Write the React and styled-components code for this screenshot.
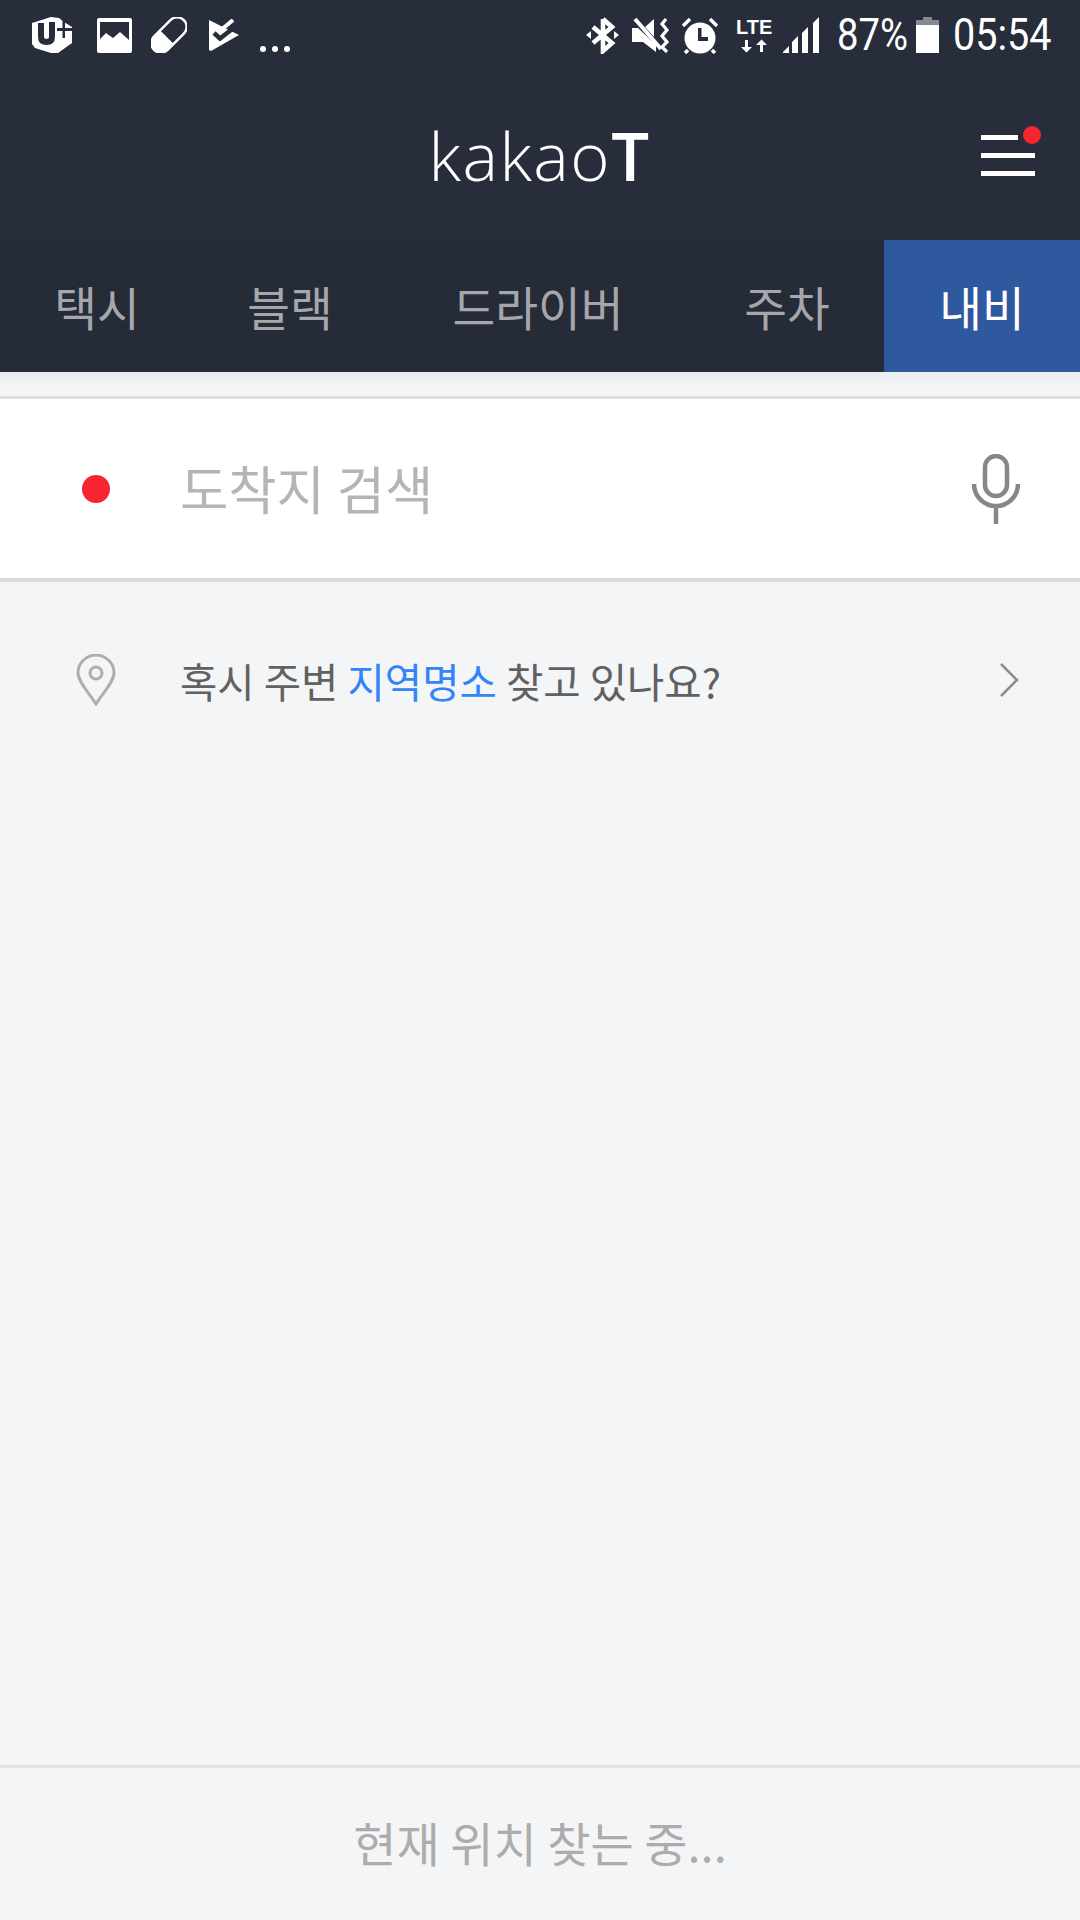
import React from "react"
import styled, { createGlobalStyle } from "styled-components"

const KR = `"Noto Sans CJK KR", "Noto Sans", sans-serif`

const GlobalStyle = createGlobalStyle`
  html, body {
    margin: 0;
    padding: 0;
    background: #f4f5f7;
  }
  * {
    box-sizing: border-box;
  }
`

const Page = styled.div`
  width: 1080px;
  height: 1920px;
  display: flex;
  flex-direction: column;
  background: #f4f5f7;
  overflow: hidden;
`

const Header = styled.header`
  background: #272d3a;
  color: #fff;
`

const StatusBar = styled.div`
  height: 70px;
  display: flex;
  justify-content: space-between;
  align-items: center;
`

const StatusLeft = styled.div`
  display: flex;
  align-items: center;
  padding-left: 31px;
`

const StatusRight = styled.div`
  display: flex;
  align-items: center;
  padding-right: 29px;
`

const StatusIcon = styled.svg`
  display: block;
  flex: none;
  margin-left: ${(p) => p.$gap || 0}px;
`

const StatusText = styled.span`
  display: block;
  flex: none;
  width: ${(p) => p.$width}px;
  margin-left: ${(p) => p.$gap || 0}px;
  font-family: Roboto, sans-serif;
  font-size: 45px;
  line-height: 70px;
  white-space: nowrap;
  transform: scaleX(${(p) => p.$scale});
  transform-origin: left center;
`

const LteLabel = styled.text`
  font-family: "Liberation Sans", sans-serif;
  font-size: 20px;
  font-weight: 700;
  fill: #fff;
`

const TitleRow = styled.div`
  height: 170px;
  position: relative;
  display: flex;
  justify-content: center;
  align-items: center;
`

const Logo = styled.h1`
  margin: 0 0 0 -1px;
  font-family: "Open Sans", sans-serif;
  font-size: 67px;
  font-weight: 300;
  line-height: 1;
  letter-spacing: 1.5px;

  b {
    font-weight: 600;
  }
`

const MenuButton = styled.div`
  position: absolute;
  left: 981px;
  top: 65px;
  width: 54px;
  height: 41px;
  display: flex;
  flex-direction: column;
  justify-content: space-between;
`

const MenuBar = styled.span`
  display: block;
  height: 5px;
  width: ${(p) => p.$width || 54}px;
  background: #fff;
`

const MenuDot = styled.span`
  position: absolute;
  left: 42px;
  top: -9px;
  width: 18px;
  height: 18px;
  border-radius: 50%;
  background: #f5262f;
`

const Tabs = styled.nav`
  height: 132px;
  display: grid;
  grid-template-columns: 194px 192px 304px 194px 196px;
  background: #262b38;
`

const Tab = styled.div`
  display: flex;
  align-items: center;
  justify-content: center;
  padding-bottom: 2px;
  font-family: ${KR};
  font-size: 46.5px;
  color: ${(p) => (p.$active ? "#fff" : "#a5a7ac")};
  background: ${(p) => (p.$active ? "#2f599f" : "transparent")};
`

const SearchWrap = styled.div`
  padding-top: 24px;
  background: linear-gradient(#ebecee 0, #f4f5f7 14px);
`

const SearchBar = styled.div`
  height: 186px;
  display: flex;
  align-items: center;
  background: #fff;
  border-top: 3px solid #dfe0e2;
  border-bottom: 4px solid #d9dadb;
`

const RedDot = styled.span`
  flex: none;
  width: 28px;
  height: 28px;
  margin-left: 82px;
  border-radius: 50%;
  background: #f5262f;
`

const SearchText = styled.div`
  margin-left: 70px;
  padding-bottom: 4px;
  flex: 1;
  font-family: ${KR};
  font-size: 52.5px;
  font-weight: 400;
  color: #b5b5b5;
`

const MicIcon = styled.svg`
  flex: none;
  margin-right: 60px;
`

const Suggestion = styled.div`
  height: 196px;
  display: flex;
  align-items: center;
  font-family: ${KR};
  font-size: 40.6px;
  color: #616161;

  em {
    font-style: normal;
    color: #3384f4;
  }
`

const PinIcon = styled.svg`
  flex: none;
  margin-left: 76px;
`

const SuggestionText = styled.div`
  flex: 1;
  margin-left: 64px;
`

const ChevronIcon = styled.svg`
  flex: none;
  margin-right: 61px;
`

const Footer = styled.footer`
  margin-top: auto;
  height: 155px;
  padding-bottom: 6px;
  display: flex;
  align-items: center;
  justify-content: center;
  border-top: 3px solid #e2e3e5;
  font-family: ${KR};
  font-size: 47px;
  color: #acacac;
`

const UPlusIcon = () => (
  <StatusIcon width="42" height="36" viewBox="0 0 42 36">
    <path d="M1 6 L20 0 L28 1 L33 5 L41 10 L41 26 L27 36 L20 36 L4 31 L1 27Z" fill="#fff" />
    <path d="M7 6 V20 Q7 28 15.5 28 Q24 28 24 20 V5 H18 V20 Q18 22 15.5 22 Q13 22 13 20 V6Z" fill="#272d3a" />
    <path d="M31.5 3 H34 V11 H41 V14 H34 V21 H31.5 V14 H26 V11 H31.5Z" fill="#272d3a" />
  </StatusIcon>
)

const ImageIcon = () => (
  <StatusIcon $gap={24} width="35" height="35" viewBox="0 0 35 35">
    <path d="M2 0 H33 Q35 0 35 2 V33 Q35 35 33 35 H2 Q0 35 0 33 V2 Q0 0 2 0Z" fill="#fff" />
    <path d="M3 4 H32 V22 L23 14 L16 20 L9 15 L3 21Z" fill="#272d3a" />
  </StatusIcon>
)

const PillIcon = () => (
  <StatusIcon $gap={19} width="36" height="36" viewBox="0 0 36 36">
    <g transform="rotate(-45 18 18)">
      <rect x="-3" y="8.5" width="42" height="19" rx="9.5" fill="none" stroke="#fff" strokeWidth="2.4" />
      <path d="M15 8 H6 A10 10 0 0 0 6 28 H15Z" fill="#fff" />
    </g>
  </StatusIcon>
)

const CheckIcon = () => (
  <StatusIcon $gap={22} width="30" height="33" viewBox="0 0 30 33">
    <path d="M0 1 L30 16 L2 32 L0 31Z" fill="#fff" />
    <path d="M5 14 L11 19.5 L27 7" fill="none" stroke="#272d3a" strokeWidth="4.5" />
    <path d="M12 11 L24 1" fill="none" stroke="#fff" strokeWidth="4" />
  </StatusIcon>
)

const MoreDots = () => (
  <StatusIcon $gap={21} width="30" height="36" viewBox="0 0 30 36" fill="#fff">
    <circle cx="3" cy="32" r="3" />
    <circle cx="15" cy="32" r="3" />
    <circle cx="27" cy="32" r="3" />
  </StatusIcon>
)

const BluetoothIcon = () => (
  <StatusIcon width="35" height="38" viewBox="0 0 35 38">
    <path d="M18 3 V35 L27 27 L8 11 M18 3 L27 11 L8 27" fill="none" stroke="#fff" strokeWidth="4.6" />
    <path d="M1 19 L6 15 V23Z M34 19 L29 15 V23Z" fill="#fff" />
  </StatusIcon>
)

const MuteIcon = () => (
  <StatusIcon $gap={12} width="38" height="36" viewBox="0 0 38 36">
    <path d="M0 11 H6 L24 28 V35 L11 25 H0Z M13 10 L22 2 V20Z" fill="#fff" />
    <path d="M3 2 L29 32" stroke="#fff" strokeWidth="4" />
    <path d="M34 2 L30 7 L35 13 L30 19 L35 25 L30 30 L35 35" fill="none" stroke="#fff" strokeWidth="3.2" />
  </StatusIcon>
)

const AlarmIcon = () => (
  <StatusIcon $gap={12} width="36" height="37" viewBox="0 0 36 37">
    <circle cx="18" cy="21" r="15.5" fill="#fff" />
    <path d="M16 11 H19.5 V20 H26 V24 H16Z" fill="#272d3a" />
    <path d="M1 9 L8 2 M35 9 L28 2 M6 33 L3 36 M30 33 L33 36" stroke="#fff" strokeWidth="3.5" />
  </StatusIcon>
)

const LteIcon = () => (
  <StatusIcon $gap={18} width="38" height="36" viewBox="0 0 38 36">
    <LteLabel x="0" y="17">LTE</LteLabel>
    <path d="M12 35 V28 H16 L10.5 22.5 L5 28 H9 V35Z" fill="#fff" transform="rotate(180 10.5 29)" />
    <path d="M27 35 V28 H31 L25.5 22.5 L20 28 H24 V35Z" fill="#fff" />
  </StatusIcon>
)

const SignalIcon = () => (
  <StatusIcon $gap={9} width="37" height="36" viewBox="0 0 37 36" fill="#fff">
    <path d="M0 36 V35 L6 29 V36Z" />
    <path d="M9 36 V25 L15 19 V36Z" />
    <path d="M19 36 V16 L25 10 V36Z" />
    <path d="M30 36 V6 L36 0 V36Z" />
  </StatusIcon>
)

const BatteryIcon = () => (
  <StatusIcon $gap={9} width="23" height="36" viewBox="0 0 23 36">
    <path d="M7 0 H16 V3 H23 V8 H0 V3 H7Z" fill="#868a90" />
    <rect y="8" width="23" height="28" fill="#fff" />
  </StatusIcon>
)

const tabs = ["택시", "블랙", "드라이버", "주차", "내비"]

export default function App() {
  return (
    <Page>
      <GlobalStyle />
      <Header>
        <StatusBar>
          <StatusLeft>
            <UPlusIcon />
            <ImageIcon />
            <PillIcon />
            <CheckIcon />
            <MoreDots />
          </StatusLeft>
          <StatusRight>
            <BluetoothIcon />
            <MuteIcon />
            <AlarmIcon />
            <LteIcon />
            <SignalIcon />
            <StatusText $gap={17} $width={70} $scale={0.85}>87%</StatusText>
            <BatteryIcon />
            <StatusText $gap={14} $width={98} $scale={0.88}>05:54</StatusText>
          </StatusRight>
        </StatusBar>
        <TitleRow>
          <Logo>kakao<b>T</b></Logo>
          <MenuButton>
            <MenuBar $width={37} />
            <MenuBar />
            <MenuBar />
            <MenuDot />
          </MenuButton>
        </TitleRow>
        <Tabs>
          {tabs.map((t) => (
            <Tab key={t} $active={t === "내비"}>{t}</Tab>
          ))}
        </Tabs>
      </Header>
      <SearchWrap>
        <SearchBar>
          <RedDot />
          <SearchText>도착지 검색</SearchText>
          <MicIcon width="48" height="70" viewBox="0 0 48 70">
            <rect x="13" y="2" width="22" height="40" rx="11" fill="none" stroke="#878787" strokeWidth="4.5" />
            <path d="M2 30 A22 22 0 0 0 46 30" fill="none" stroke="#878787" strokeWidth="4.5" />
            <path d="M24 52 V70" stroke="#878787" strokeWidth="4.5" />
          </MicIcon>
        </SearchBar>
      </SearchWrap>
      <Suggestion>
        <PinIcon width="40" height="52" viewBox="0 0 40 52">
          <path d="M20 50 C14 40 2 28 2 19 A18 18 0 0 1 38 19 C38 28 26 40 20 50Z" fill="none" stroke="#aeaeae" strokeWidth="3" />
          <circle cx="20" cy="19" r="6" fill="none" stroke="#aeaeae" strokeWidth="3" />
        </PinIcon>
        <SuggestionText>
          혹시 주변 <em>지역명소</em> 찾고 있나요?
        </SuggestionText>
        <ChevronIcon width="20" height="34" viewBox="0 0 20 34">
          <path d="M2 1 L18 17 L2 33" fill="none" stroke="#8e8e8e" strokeWidth="2.5" />
        </ChevronIcon>
      </Suggestion>
      <Footer>현재 위치 찾는 중...</Footer>
    </Page>
  )
}
